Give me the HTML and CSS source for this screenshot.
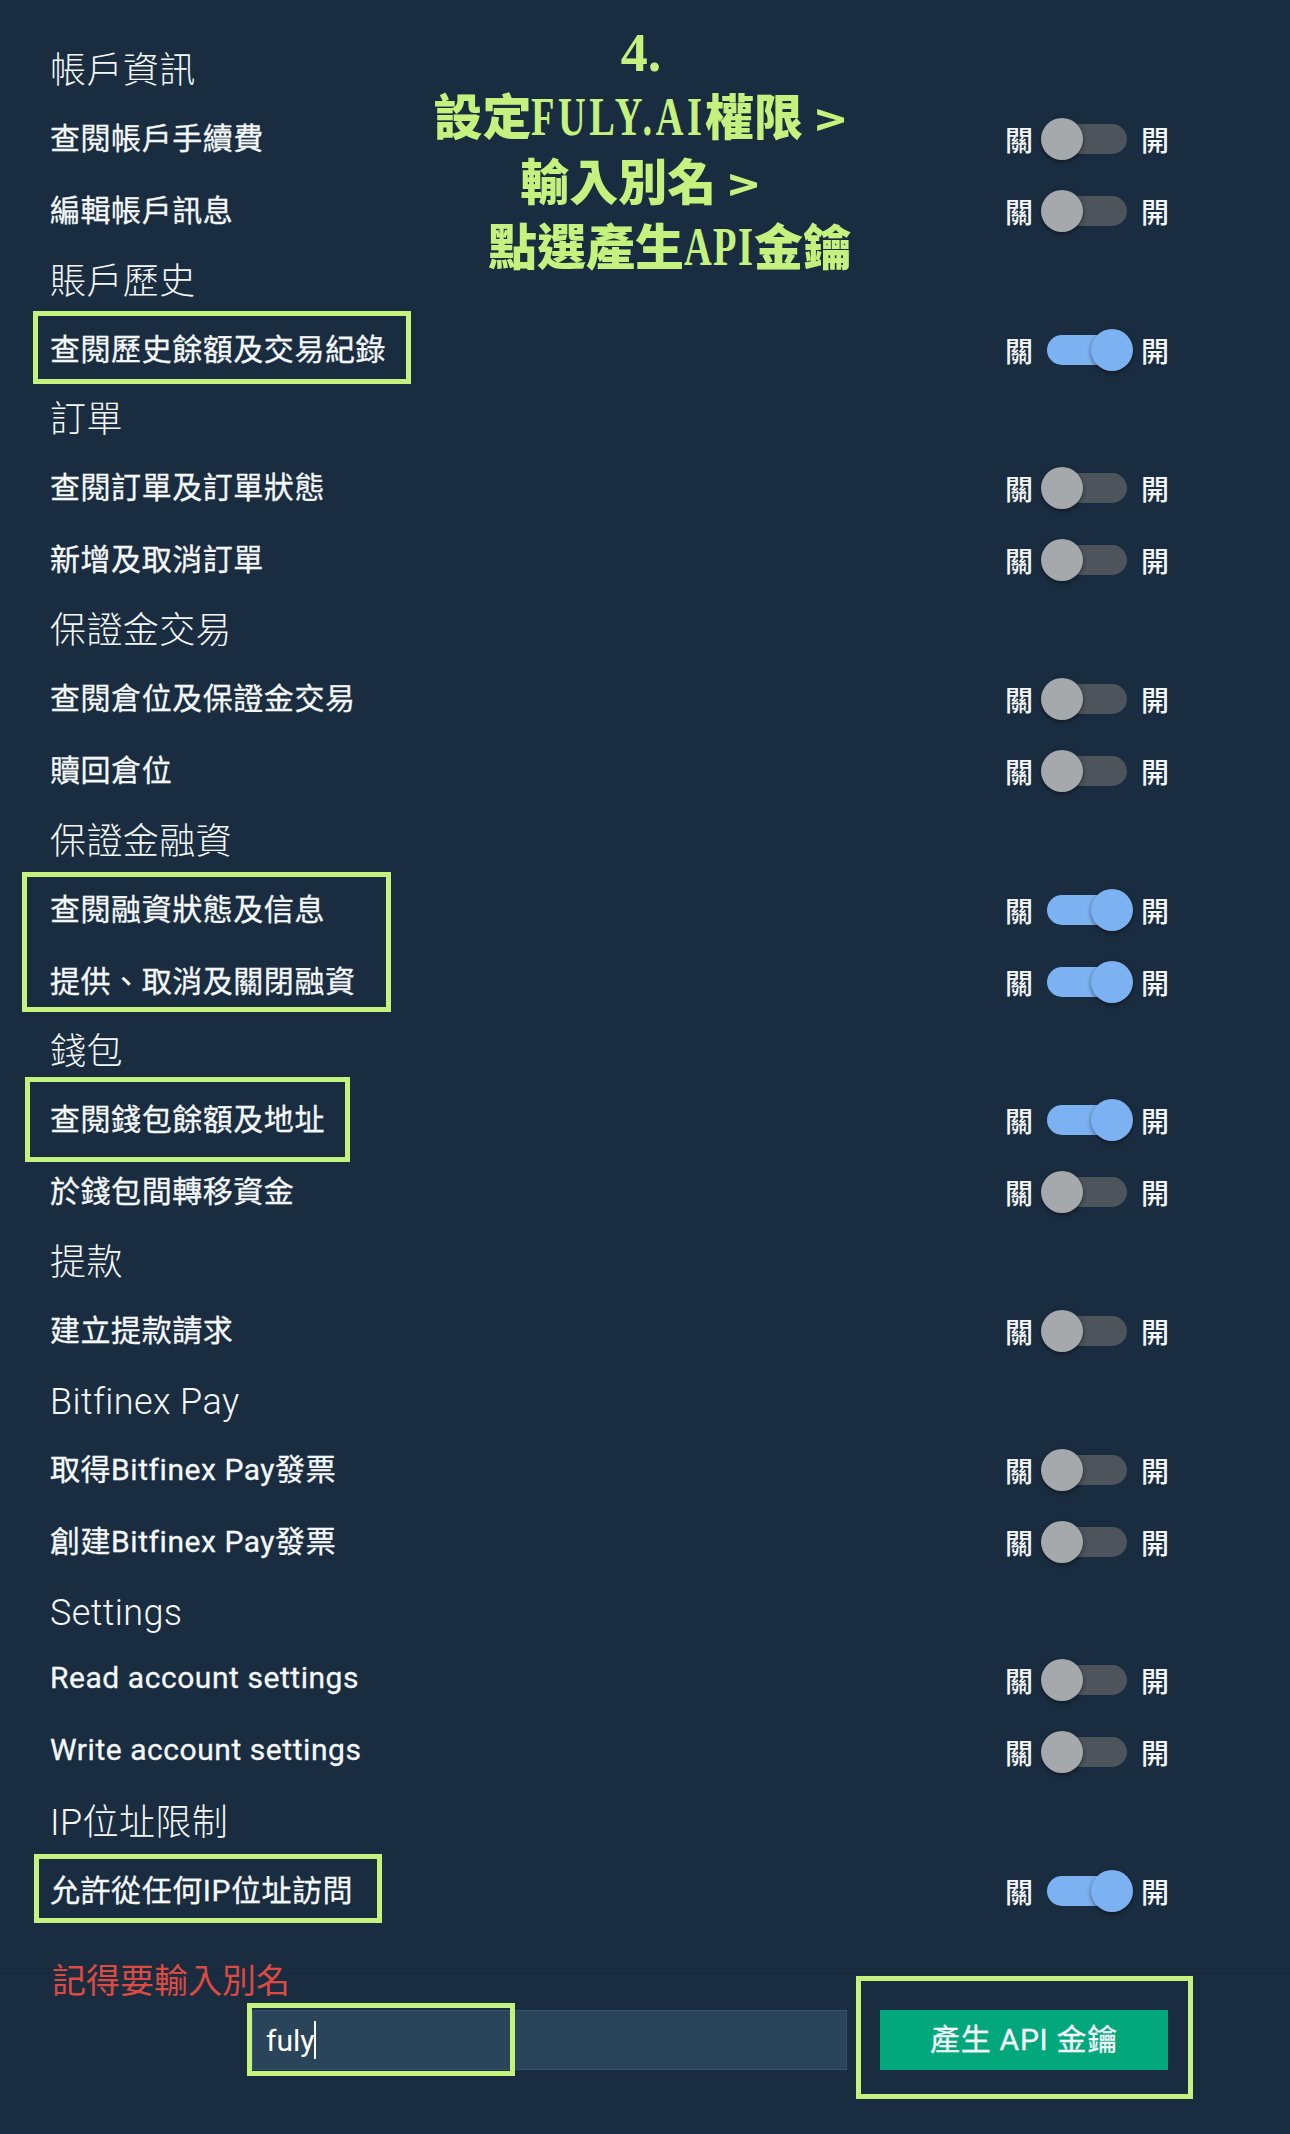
FILE: index.html
```html
<!DOCTYPE html>
<html lang="zh-Hant">
<head>
  <meta charset="UTF-8">
  <title>API 金鑰權限</title>
  <link rel="stylesheet" href="styles.css">
</head>
<body>
  <div class="page">

    <!-- Permissions -->
    <div class="group-title">帳戶資訊</div>
    <div class="perm-row"><span class="perm-name">查閱帳戶手續費</span><div class="switch"><span>關</span><i class="toggle"></i><span>開</span></div></div>
    <div class="perm-row"><span class="perm-name">編輯帳戶訊息</span><div class="switch"><span>關</span><i class="toggle"></i><span>開</span></div></div>

    <div class="group-title">賬戶歷史</div>
    <div class="perm-row"><span class="perm-name">查閱歷史餘額及交易紀錄</span><div class="switch"><span>關</span><i class="toggle on"></i><span>開</span></div></div>

    <div class="group-title">訂單</div>
    <div class="perm-row"><span class="perm-name">查閱訂單及訂單狀態</span><div class="switch"><span>關</span><i class="toggle"></i><span>開</span></div></div>
    <div class="perm-row"><span class="perm-name">新增及取消訂單</span><div class="switch"><span>關</span><i class="toggle"></i><span>開</span></div></div>

    <div class="group-title">保證金交易</div>
    <div class="perm-row"><span class="perm-name">查閱倉位及保證金交易</span><div class="switch"><span>關</span><i class="toggle"></i><span>開</span></div></div>
    <div class="perm-row"><span class="perm-name">贖回倉位</span><div class="switch"><span>關</span><i class="toggle"></i><span>開</span></div></div>

    <div class="group-title">保證金融資</div>
    <div class="perm-row"><span class="perm-name">查閱融資狀態及信息</span><div class="switch"><span>關</span><i class="toggle on"></i><span>開</span></div></div>
    <div class="perm-row"><span class="perm-name">提供、取消及關閉融資</span><div class="switch"><span>關</span><i class="toggle on"></i><span>開</span></div></div>

    <div class="group-title">錢包</div>
    <div class="perm-row"><span class="perm-name">查閱錢包餘額及地址</span><div class="switch"><span>關</span><i class="toggle on"></i><span>開</span></div></div>
    <div class="perm-row"><span class="perm-name">於錢包間轉移資金</span><div class="switch"><span>關</span><i class="toggle"></i><span>開</span></div></div>

    <div class="group-title">提款</div>
    <div class="perm-row"><span class="perm-name">建立提款請求</span><div class="switch"><span>關</span><i class="toggle"></i><span>開</span></div></div>

    <div class="group-title">Bitfinex Pay</div>
    <div class="perm-row"><span class="perm-name">取得Bitfinex Pay發票</span><div class="switch"><span>關</span><i class="toggle"></i><span>開</span></div></div>
    <div class="perm-row"><span class="perm-name">創建Bitfinex Pay發票</span><div class="switch"><span>關</span><i class="toggle"></i><span>開</span></div></div>

    <div class="group-title">Settings</div>
    <div class="perm-row"><span class="perm-name">Read account settings</span><div class="switch"><span>關</span><i class="toggle"></i><span>開</span></div></div>
    <div class="perm-row"><span class="perm-name">Write account settings</span><div class="switch"><span>關</span><i class="toggle"></i><span>開</span></div></div>

    <div class="group-title">IP位址限制</div>
    <div class="perm-row"><span class="perm-name">允許從任何IP位址訪問</span><div class="switch"><span>關</span><i class="toggle on"></i><span>開</span></div></div>

    <!-- Alias form -->
    <div class="alias-section">
      <div class="alias-note">記得要輸入別名</div>
      <div class="alias-form">
        <div class="alias-input">fuly<i class="caret"></i></div>
        <div class="generate-btn">產生 API 金鑰</div>
      </div>
    </div>

    <!-- Tutorial overlay -->
    <div class="callout">
      <div class="callout-num">4.</div>
      <div>設定<span class="latin">FULY.AI</span>權限<span class="arrow">&gt;</span></div>
      <div>輸入別名<span class="arrow">&gt;</span></div>
      <div class="callout-last">點選產生<span class="latin latin-api">API</span>金鑰</div>
    </div>
    <div class="mark mark-history"></div>
    <div class="mark mark-funding"></div>
    <div class="mark mark-wallet"></div>
    <div class="mark mark-ip"></div>
    <div class="mark mark-input"></div>
    <div class="mark mark-button"></div>
  </div>
</body>
</html>
```

FILE: styles.css
```css
/* General styling */
* {
  margin: 0;
  padding: 0;
  box-sizing: border-box;
}

body {
  background: #1a2d40;
  color: #f4f7f9;
  font-family: Roboto, "Noto Sans CJK TC", sans-serif;
}

.page {
  position: relative;
  width: 1290px;
  height: 2134px;
  padding: 36px 121px 0 50px;
  overflow: hidden;
}

/* Permission list */
.group-title {
  height: 66.9px;
  padding-top: 4px;
  line-height: 62.9px;
  font-size: 36px;
  font-weight: 300;
  letter-spacing: 0.4px;
}

.perm-row {
  display: flex;
  align-items: center;
  justify-content: space-between;
  height: 71.9px;
}

.perm-name {
  margin-bottom: 6px;
  font-size: 30px;
  font-weight: 400;
  letter-spacing: 0.55px;
  -webkit-text-stroke: 0.3px #f4f7f9;
}

.switch {
  display: flex;
  align-items: center;
  font-size: 28px;
  font-weight: 500;
}

/* Toggle */
.toggle {
  position: relative;
  display: block;
  width: 80px;
  height: 30px;
  margin: 0 14px;
  background: #4d545b;
  border-radius: 15px;
}

.toggle::after {
  content: "";
  position: absolute;
  top: -6px;
  left: -6px;
  width: 42px;
  height: 42px;
  background: #a5a9ac;
  border-radius: 50%;
  box-shadow: 0 2px 5px rgba(0, 0, 0, 0.45);
}

.toggle.on {
  background: #7db2f2;
}

.toggle.on::after {
  left: 44px;
  background: #7db2f2;
}

/* Alias form */
.alias-section {
  margin: 41px -121px 0 -50px;
  border-top: 1px solid #17293a;
}

.alias-note {
  height: 40px;
  line-height: 40px;
  margin-top: -8px;
  margin-left: 52px;
  font-size: 34px;
  font-weight: 400;
  color: #dc4a41;
}

.alias-form {
  display: flex;
  gap: 33px;
  margin-top: 9px;
  margin-left: 252px;
}

.alias-input {
  display: flex;
  align-items: center;
  width: 595px;
  height: 60px;
  padding-left: 13px;
  background: #2a4459;
  border: 1px solid #2f526d;
  font-size: 30px;
  color: #fff;
}

.caret {
  display: block;
  width: 2px;
  height: 38px;
  background: #f4f7f9;
}

.generate-btn {
  width: 288px;
  height: 60px;
  line-height: 60px;
  text-align: center;
  background: #02a87c;
  font-size: 30px;
  letter-spacing: 0.7px;
  -webkit-text-stroke: 0.3px #f4f7f9;
}

/* Tutorial overlay */
.callout {
  position: absolute;
  top: 21px;
  left: 341px;
  width: 600px;
  text-align: center;
  font-size: 49px;
  line-height: 65px;
  font-weight: 900;
  color: #c5f27e;
}

.callout > div {
  height: 65px;
}

.callout-num {
  font-family: "Liberation Serif", serif;
  font-size: 54px;
  font-weight: 700;
}

/* condensed display serif for the latin bits */
.latin {
  display: inline-block;
  margin-right: -72px;
  font-family: "Liberation Serif", serif;
  font-size: 54px;
  line-height: 1;
  font-weight: 700;
  letter-spacing: 5px;
  transform: scaleX(0.71);
  transform-origin: left center;
}

.latin-api {
  margin-right: -29px;
  letter-spacing: 2px;
}

.arrow {
  display: inline-block;
  margin-left: 14px;
  margin-right: 6px;
  font-family: Roboto, sans-serif;
  font-weight: 500;
  transform: scaleX(1.3);
}

.callout-last {
  padding-left: 58px;
}

/* Highlight boxes */
.mark {
  position: absolute;
  border: 5px solid #c5f27e;
}

.mark-history { left: 33px; top: 311px; width: 378px; height: 73px; }
.mark-funding { left: 22px; top: 872px; width: 369px; height: 140px; }
.mark-wallet { left: 25px; top: 1077px; width: 325px; height: 85px; }
.mark-ip { left: 34px; top: 1854px; width: 348px; height: 69px; }
.mark-input { left: 247px; top: 2003px; width: 268px; height: 73px; }
.mark-button { left: 856px; top: 1976px; width: 337px; height: 123px; }
```
